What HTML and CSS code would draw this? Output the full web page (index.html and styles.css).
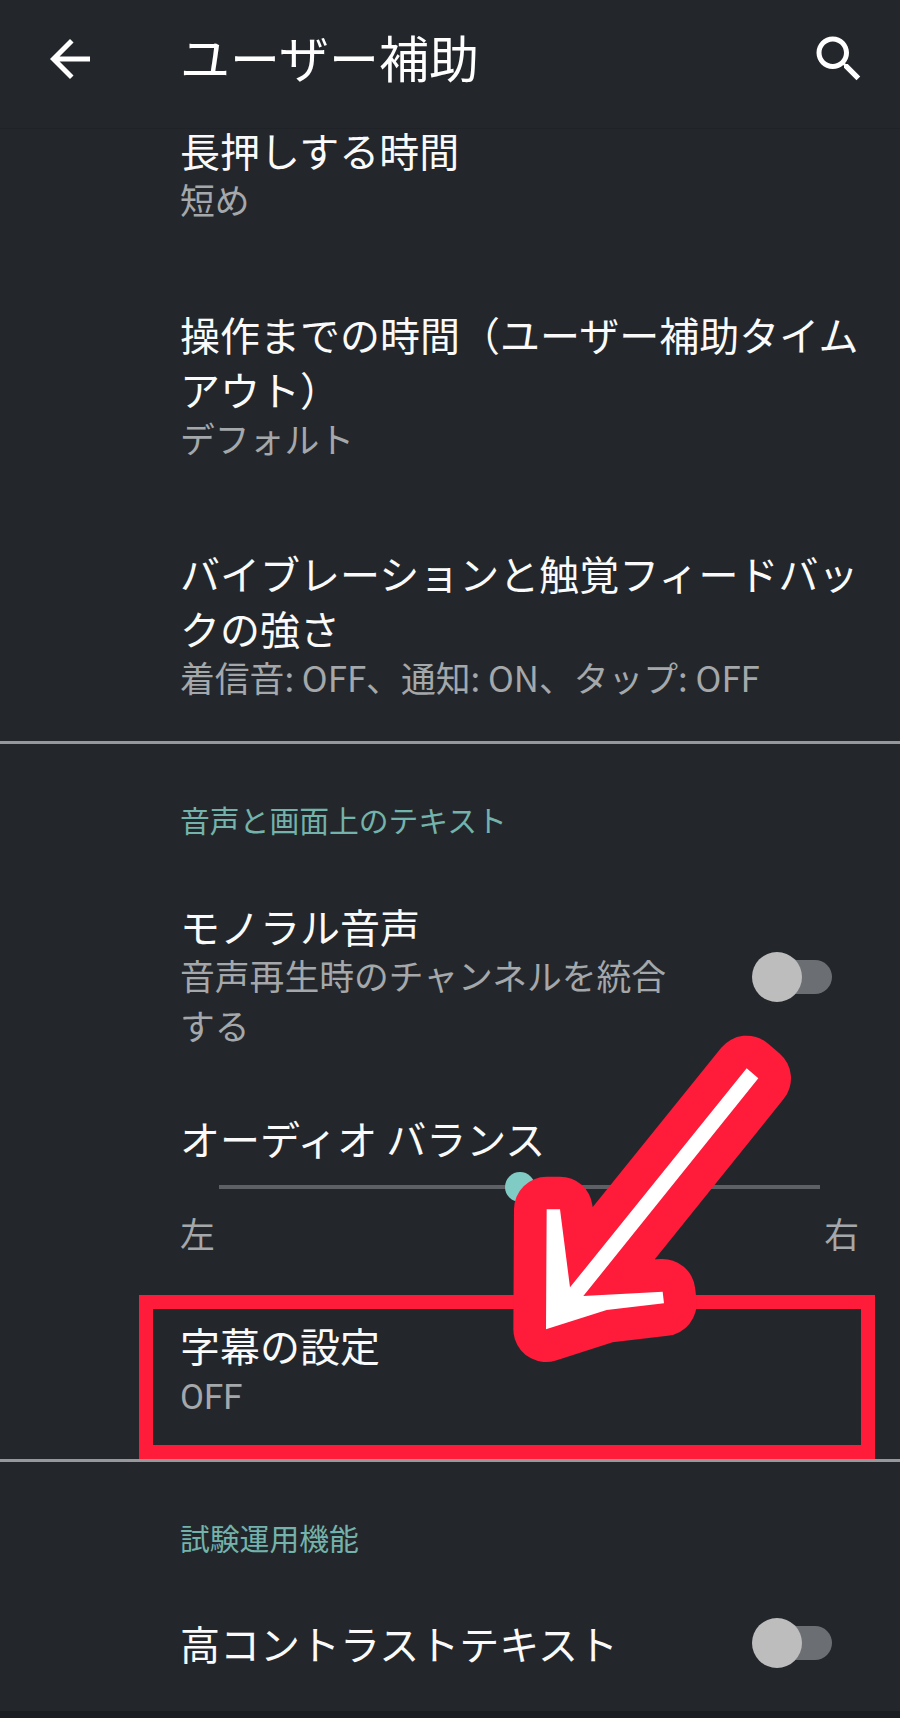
FILE: index.html
```html
<!DOCTYPE html>
<html lang="ja">
<head>
<meta charset="utf-8">
<title>ユーザー補助</title>
<link rel="stylesheet" href="styles.css">
</head>
<body>
<div class="screen">
  <header class="appbar">
    <svg class="icon back" viewBox="0 0 24 24"><path d="M20 11H7.83l5.59-5.59L12 4l-8 8 8 8 1.41-1.41L7.83 13H20v-2z"/></svg>
    <h1 class="appbar-title">ユーザー補助</h1>
    <svg class="icon search" viewBox="0 0 24 24"><path d="M15.5 14h-.79l-.28-.27C15.41 12.59 16 11.11 16 9.5 16 5.91 13.09 3 9.5 3S3 5.91 3 9.5 5.91 16 9.5 16c1.61 0 3.09-.59 4.23-1.57l.27.28v.79l5 4.99L20.49 19l-4.99-5zm-6 0C7.01 14 5 11.99 5 9.5S7.01 5 9.5 5 14 7.01 14 9.5 11.99 14 9.5 14z"/></svg>
  </header>
  <main class="list">
    <section class="group first-group">
      <div class="item first-item">
        <div class="title">長押しする時間</div>
        <div class="sub">短め</div>
      </div>
      <div class="item">
        <div class="title">操作までの時間（ユーザー補助タイムアウト）</div>
        <div class="sub">デフォルト</div>
      </div>
      <div class="item">
        <div class="title">バイブレーションと触覚フィードバックの強さ</div>
        <div class="sub">着信音: OFF、通知: ON、タップ: OFF</div>
      </div>
    </section>
    <section class="group middle-group">
      <div class="category">音声と画面上のテキスト</div>
      <div class="item row mono">
        <div class="row-text">
          <div class="title">モノラル音声</div>
          <div class="sub">音声再生時のチャンネルを統合する</div>
        </div>
        <div class="toggle"><span class="track"></span><span class="thumb"></span></div>
      </div>
      <div class="balance">
        <div class="title">オーディオ バランス</div>
        <div class="slider"><span class="slider-thumb"></span></div>
        <div class="ends"><span class="sub">左</span><span class="sub">右</span></div>
      </div>
      <div class="caption">
        <div class="title">字幕の設定</div>
        <div class="sub off">OFF</div>
      </div>
    </section>
    <section class="group last-group">
      <div class="category">試験運用機能</div>
      <div class="item row contrast">
        <div class="title">高コントラストテキスト</div>
        <div class="toggle"><span class="track"></span><span class="thumb"></span></div>
      </div>
    </section>
  </main>
  <div class="bottom-bar"></div>
  <div class="red-box"></div>
  <svg class="arrow" viewBox="0 0 1500 1440">
    <polygon class="arrow-red" points="1040,205 1075,235 550,888 788,875 792,910 620,930 438,988 440,628 480,628 510,862"/>
    <polygon class="arrow-white" points="1040,205 1075,235 550,888 788,875 792,910 620,930 438,988 440,628 480,628 510,862"/>
  </svg>
</div>
</body>
</html>
```

FILE: styles.css
```css
html, body {
  margin: 0;
  padding: 0;
  background: #23272c;
}
.screen {
  position: relative;
  width: 900px;
  height: 1718px;
  overflow: hidden;
  background: #23272c;
  display: flex;
  flex-direction: column;
  font-family: "Noto Sans CJK JP", "Noto Sans", sans-serif;
  color: #fff;
}
.appbar {
  height: 129px;
  flex: none;
  display: flex;
  align-items: center;
  box-sizing: border-box;
  padding: 0 31px 11px 40px;
  background: #23272c;
  border-bottom: 1px solid #1f2328;
  position: relative;
  z-index: 1;
}
.icon {
  width: 60px;
  height: 60px;
  fill: #fff;
  flex: none;
}
.appbar-title {
  margin: 0 0 6px 80px;
  flex: 1;
  font-size: 50px;
  font-weight: 400;
  line-height: 60px;
}
.list {
  flex: 1;
  min-height: 0;
}
.group {
  padding-left: 180px;
}
.first-group {
  padding-bottom: 38.5px;
  border-bottom: 3px solid #96989c;
  margin-top: -6px;
}
.item {
  margin-top: 86.5px;
  width: 690px;
}
.first-item {
  margin-top: 0;
}
.title {
  font-size: 40px;
  line-height: 55px;
  color: #fafafa;
  margin-top: -3.5px;
  margin-bottom: 3.5px;
}
.sub {
  font-size: 34.8px;
  line-height: 50px;
  color: #a5a8aa;
  margin-top: -7.5px;
}
.category {
  font-size: 29.8px;
  line-height: 40px;
  color: #74b3ab;
  margin-top: 55.5px;
}
.row {
  display: flex;
  align-items: center;
  justify-content: space-between;
}
.mono {
  margin-top: 63.5px;
  align-items: flex-start;
}
.row-text {
  width: 500px;
}
.toggle {
  position: relative;
  width: 82px;
  height: 50px;
  flex: none;
  margin-right: 36.5px;
}
.mono .toggle {
  margin-top: 49.5px;
}
.contrast .toggle {
  margin-bottom: 8px;
}
.track {
  position: absolute;
  left: 6px;
  right: 2px;
  top: 8px;
  height: 34px;
  border-radius: 17px;
  background: #6b6f73;
}
.thumb {
  position: absolute;
  left: 0;
  top: 0;
  width: 50px;
  height: 50px;
  border-radius: 50%;
  background: #bdbdbd;
}
.balance {
  margin-top: 64.5px;
  width: 679px;
}
.slider {
  position: relative;
  margin: 19px 39px 0 39px;
  height: 4px;
  background: #5d6165;
}
.slider-thumb {
  position: absolute;
  left: 286px;
  top: -13px;
  width: 30px;
  height: 30px;
  border-radius: 50%;
  background: #80cbc4;
}
.ends {
  display: flex;
  justify-content: space-between;
  margin-top: 19px;
}
.ends .sub {
  margin-top: 0;
}
.caption {
  margin-top: 63.5px;
}
.caption .sub {
  margin-top: -4.5px;
}
.off {
  font-family: "Roboto", "Noto Sans CJK JP", sans-serif;
}
.middle-group {
  padding-bottom: 36.5px;
  border-bottom: 3px solid #96989c;
}
.contrast {
  margin-top: 61px;
}
.bottom-bar {
  position: absolute;
  left: 0;
  right: 0;
  bottom: 0;
  height: 7px;
  background: #1a1d21;
}
.red-box {
  position: absolute;
  left: 139px;
  top: 1295px;
  width: 736px;
  height: 164px;
  box-sizing: border-box;
  border: 14px solid #ff1b3a;
}
.arrow {
  position: absolute;
  left: 400px;
  top: 1000px;
  width: 500px;
  height: 480px;
}
.arrow-red {
  fill: #ff1b3a;
  stroke: #ff1b3a;
  stroke-width: 196;
  stroke-linejoin: round;
}
.arrow-white {
  fill: #fff;
}
```
